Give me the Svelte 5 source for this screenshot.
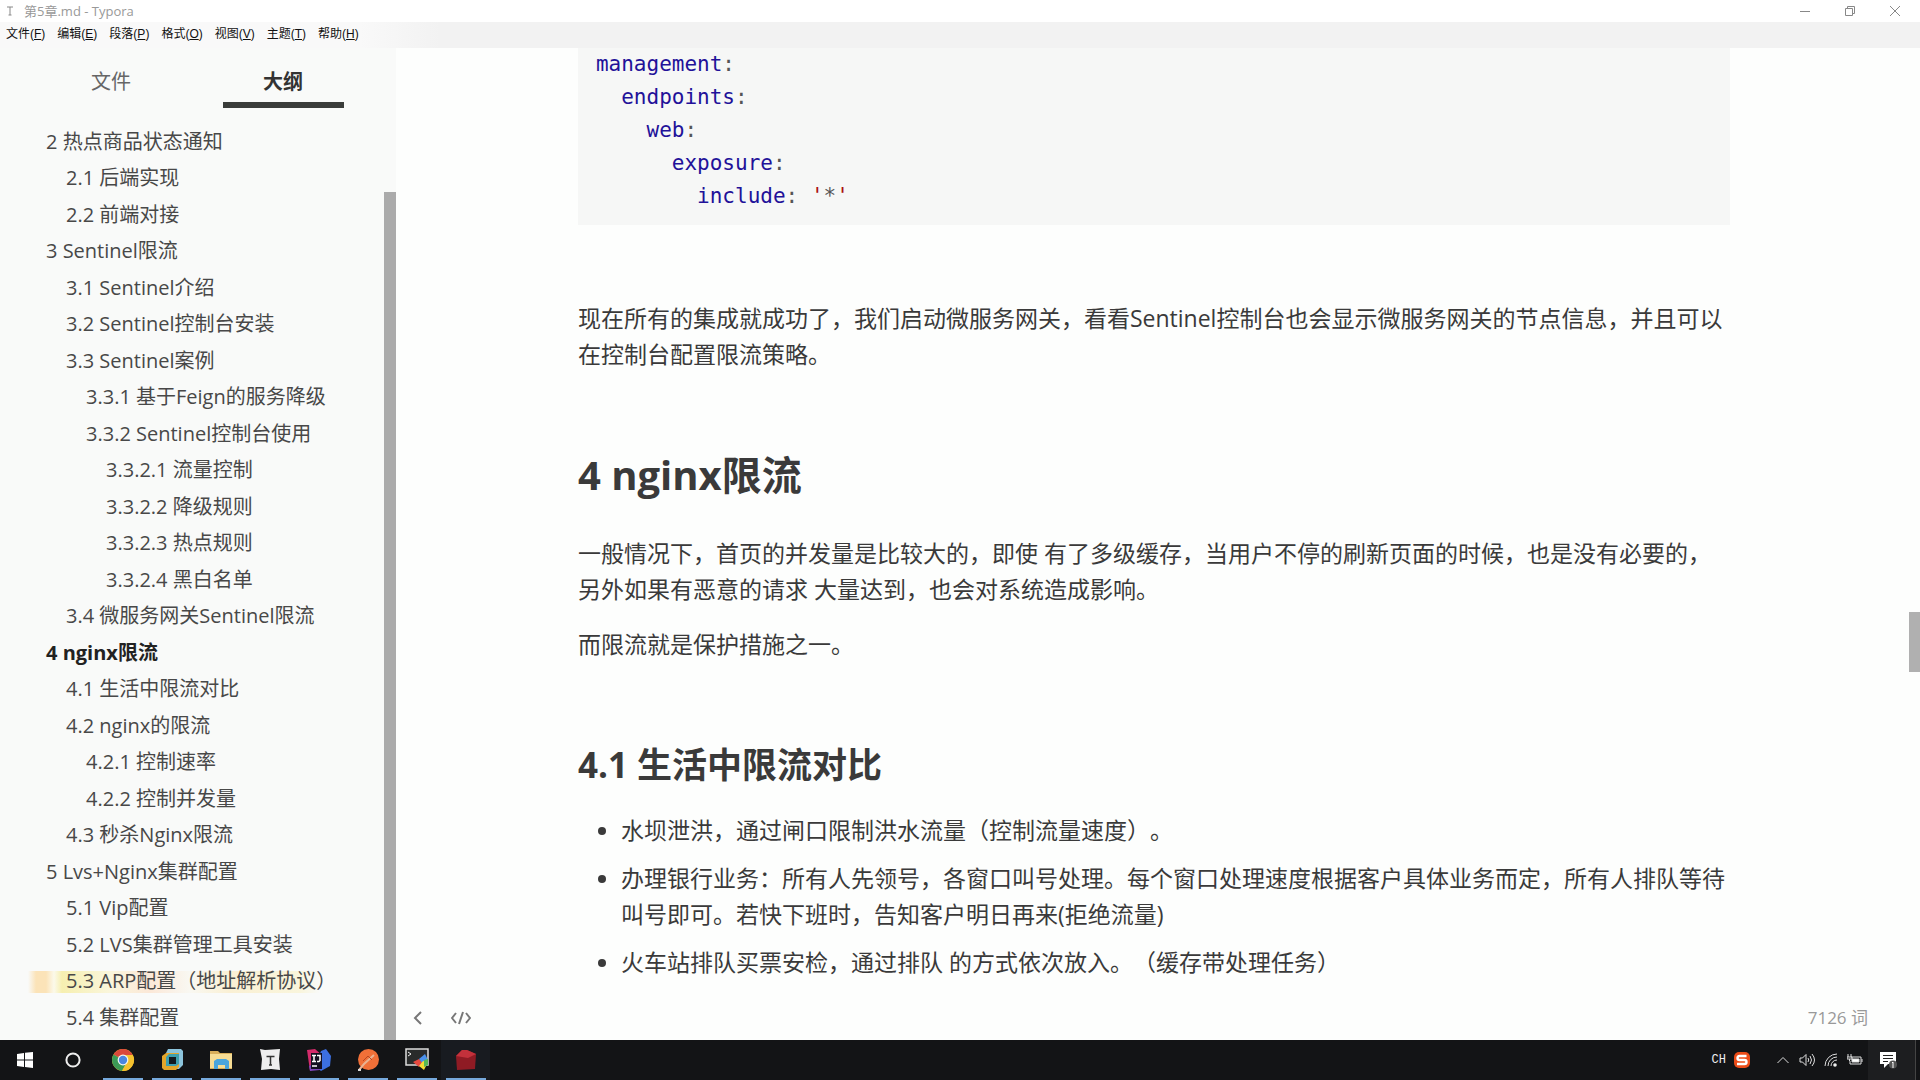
<script lang="ts">
	type OutlineItem = { level: number; text: string; active?: boolean; marked?: boolean };

	const menus = [
		['文件', 'F'],
		['编辑', 'E'],
		['段落', 'P'],
		['格式', 'O'],
		['视图', 'V'],
		['主题', 'T'],
		['帮助', 'H']
	];

	const outline: OutlineItem[] = [
		{ level: 1, text: '2 热点商品状态通知' },
		{ level: 2, text: '2.1 后端实现' },
		{ level: 2, text: '2.2 前端对接' },
		{ level: 1, text: '3 Sentinel限流' },
		{ level: 2, text: '3.1 Sentinel介绍' },
		{ level: 2, text: '3.2 Sentinel控制台安装' },
		{ level: 2, text: '3.3 Sentinel案例' },
		{ level: 3, text: '3.3.1 基于Feign的服务降级' },
		{ level: 3, text: '3.3.2 Sentinel控制台使用' },
		{ level: 4, text: '3.3.2.1 流量控制' },
		{ level: 4, text: '3.3.2.2 降级规则' },
		{ level: 4, text: '3.3.2.3 热点规则' },
		{ level: 4, text: '3.3.2.4 黑白名单' },
		{ level: 2, text: '3.4 微服务网关Sentinel限流' },
		{ level: 1, text: '4 nginx限流', active: true },
		{ level: 2, text: '4.1 生活中限流对比' },
		{ level: 2, text: '4.2 nginx的限流' },
		{ level: 3, text: '4.2.1 控制速率' },
		{ level: 3, text: '4.2.2 控制并发量' },
		{ level: 2, text: '4.3 秒杀Nginx限流' },
		{ level: 1, text: '5 Lvs+Nginx集群配置' },
		{ level: 2, text: '5.1 Vip配置' },
		{ level: 2, text: '5.2 LVS集群管理工具安装' },
		{ level: 2, text: '5.3 ARP配置（地址解析协议）', marked: true },
		{ level: 2, text: '5.4 集群配置' }
	];

	const yaml = ['management', 'endpoints', 'web', 'exposure'];
</script>

<div class="screen">
	<header class="titlebar">
		<svg class="doc-icon" viewBox="0 0 12 12"><path d="M3 2h6M6 2v8M4.500 10h3" /></svg>
		<span class="title">第5章.md - Typora</span>
		<div class="window-buttons">
			<button aria-label="最小化"><svg viewBox="0 0 12 12"><path d="M1 6.500h10" /></svg></button>
			<button aria-label="还原"><svg viewBox="0 0 12 12"><path d="M1.500 3.500h7v7h-7zM3.500 3.500v-2h7v7h-2" /></svg></button>
			<button aria-label="关闭"><svg viewBox="0 0 12 12"><path d="M1 1l10 10M11 1L1 11" /></svg></button>
		</div>
	</header>

	<nav class="menubar">
		{#each menus as [label, key]}
			<button>{label}(<u>{key}</u>)</button>
		{/each}
	</nav>

	<div class="workspace">
		<aside class="sidebar">
			<div class="tabs">
				<button>文件</button>
				<button class="active">大纲</button>
			</div>
			<ul class="outline">
				{#each outline as item}
					<li class="level-{item.level}" class:active={item.active} class:marked={item.marked}>
						<a href="#outline">{item.text}</a>
					</li>
				{/each}
			</ul>
			<div class="sidebar-thumb"></div>
		</aside>

		<main class="editor">
			<article class="write">
				<pre>{#each yaml as key, i}{'  '.repeat(i)}<b>{key}</b>:{'\n'}{/each}{'  '.repeat(4)}<b>include</b>: <i>'</i>*<i>'</i></pre>
				<p>现在所有的集成就成功了，我们启动微服务网关，看看Sentinel控制台也会显示微服务网关的节点信息，并且可以在控制台配置限流策略。</p>
				<h2>4 nginx限流</h2>
				<p>一般情况下，首页的并发量是比较大的，即使 有了多级缓存，当用户不停的刷新页面的时候，也是没有必要的，另外如果有恶意的请求 大量达到，也会对系统造成影响。</p>
				<p>而限流就是保护措施之一。</p>
				<h3>4.1 生活中限流对比</h3>
				<ul>
					<li>水坝泄洪，通过闸口限制洪水流量（控制流量速度）。</li>
					<li>办理银行业务：所有人先领号，各窗口叫号处理。每个窗口处理速度根据客户具体业务而定，所有人排队等待叫号即可。若快下班时，告知客户明日再来(拒绝流量)</li>
					<li>火车站排队买票安检，通过排队 的方式依次放入。（缓存带处理任务）</li>
				</ul>
			</article>
			<footer class="statusbar">
				<button aria-label="隐藏侧边栏"><svg viewBox="0 0 20 20"><path d="M13 4l-6 6 6 6" /></svg></button>
				<button aria-label="源代码模式"><svg viewBox="0 0 20 20"><path d="M5 5l-4 5 4 5M15 5l4 5-4 5M12 4L8 16" /></svg></button>
				<span class="word-count">7126 词</span>
			</footer>
			<div class="editor-thumb"></div>
		</main>
	</div>

	<div class="taskbar">
		<button class="app" aria-label="开始">
			<svg viewBox="0 0 24 24"><path fill="#fff" d="M4 6l7-1v6.500H4zM12 4.800L20 4v7.500h-8zM4 12.500h7V19l-7-1zM12 12.500h8V20l-8-.900z" /></svg>
		</button>
		<button class="app" aria-label="Cortana">
			<svg viewBox="0 0 24 24"><circle cx="11" cy="12" r="6.600" fill="none" stroke="#eee" stroke-width="2" /></svg>
		</button>
		<button class="app running" aria-label="Chrome">
			<svg viewBox="0 0 24 24">
				<circle cx="12" cy="12" r="11" fill="#f5c12e" />
				<path fill="#d9483b" d="M12 12L2.500 6.500a11 11 0 0 1 19 0z" />
				<path fill="#3c9a56" d="M2.500 6.500a11 11 0 0 0 8.500 16.450L16 14l-4-2z" />
				<path fill="#f5c12e" d="M12 7h9.800a11 11 0 0 1-10.800 15.950L16 14z" />
				<circle cx="12" cy="12" r="5.400" fill="#f4f6f4" /><circle cx="12" cy="12" r="4.200" fill="#4b86e0" />
			</svg>
		</button>
		<button class="app running" aria-label="VMware">
			<svg viewBox="0 0 24 24">
				<path fill="#8cc4dc" d="M8 1h13l2 2v14l-4 4H6V5z" />
				<path fill="#e4a62a" d="M2 8l4-3h13v14l-3 3H4l-2-2z" />
				<path fill="#3fa0ae" d="M6 9l3-3h10v10l-3 2H6z" /><path fill="#111a20" d="M9 9h7v7H9z" />
			</svg>
		</button>
		<button class="app running" aria-label="文件资源管理器">
			<svg viewBox="0 0 24 24">
				<path fill="#d8ae5a" d="M1 3h8l2 2h12v16H1z" /><path fill="#f6dc94" d="M1 6h22v14H1z" />
				<path fill="#4aa5dc" d="M5 21v-8l3-2h9l3 2v8h-4v-4H9v4z" />
			</svg>
		</button>
		<button class="app running" aria-label="Typora">
			<svg viewBox="0 0 24 24">
				<path fill="#eee" d="M2 1l5 1 15-1-1 10 1 11-9-1-10 1 1-11z" /><path fill="none" stroke="#333" stroke-width="1.500" d="M8.500 8.500h8M12.500 8v9M11 17h3" />
			</svg>
		</button>
		<button class="app running" aria-label="IntelliJ IDEA">
			<svg viewBox="0 0 24 24">
				<path fill="#d42b6b" d="M0 2l8-1 8 7-4 11-9 4z" /><path fill="#3c6fe0" d="M14 3l5-2 5 7-1 10-9 5-6-5z" /><path fill="#7d46b8" d="M2 18l7-4 6 4-2 4-10 1z" />
				<path fill="#141022" d="M4 5h11v16H4z" /><path fill="none" stroke="#fff" stroke-width="1.500" d="M5 7.500h4M7 7.500v6M5 13.500h4M10 7.500h3v5l-1 1h-2M5 18h5" />
			</svg>
		</button>
		<button class="app running" aria-label="Postman">
			<svg viewBox="0 0 24 24">
				<circle cx="12.500" cy="11.500" r="10.500" fill="#f07038" /><path fill="none" stroke="#e9b393" stroke-width="2" d="M18 7L8 16l-5 6" /><path fill="none" stroke="#b94721" d="M7 13l5-5 4 4" /><path fill="none" stroke="#ddd" stroke-width="2" d="M2 22h3" />
			</svg>
		</button>
		<button class="app running" aria-label="终端">
			<svg viewBox="0 0 24 24">
				<path fill="#292b2b" stroke="#ddd" stroke-width="1.500" d="M1 1h22v16H1z" /><path fill="none" stroke="#eee" d="M3 4l3 2-3 2" />
				<path fill="#e64a40" d="M8 14l6-3 4 4-4 4z" /><path fill="#4a91ed" d="M14 11l6-5 3 6-5 4z" /><path fill="#f4dc35" d="M14 18l4-5 5 1-4 8z" /><path fill="#57b857" d="M19 12l4-1v6l-4 2z" />
			</svg>
		</button>
		<button class="app running current" aria-label="录屏">
			<svg viewBox="0 0 24 24"><path fill="#8f1b24" d="M2 8l6-6h5l9 4-1 15-18 1z" /><path fill="#c3313b" d="M2 8l6-6h5l9 4-8 4z" /></svg>
		</button>

		<div class="tray">
			<span class="ime">CH</span>
			<svg class="sogou" viewBox="0 0 16 16"><rect width="16" height="16" rx="5" fill="#eb4c18" /><path fill="none" stroke="#fff" stroke-width="2.400" d="M12.500 4H5.500Q3.500 4 3.500 6t2 2h5q2 0 2 2t-2 2H3" /></svg>
			<svg class="chevron" viewBox="0 0 16 16"><path d="M2.500 11L8 5.500l5.500 5.500" /></svg>
			<svg viewBox="0 0 16 16"><path d="M1 6h2.500L7 2.500v11L3.500 10H1zM9 6q1.500 2 0 4M11 4q3 4 0 8M13 2q5 6 0 12" /></svg>
			<svg viewBox="0 0 16 16"><path d="M2 14A12 12 0 0 1 14 2M5 14A9 9 0 0 1 14 5M8 14A6 6 0 0 1 14 8" /><circle cx="12" cy="13" r="1.800" fill="#eee" stroke="none" /></svg>
			<svg viewBox="0 0 16 16"><path d="M4 5h10v7H3V9M15 7v3M1 2v3M4 2v3M0 5h5v2H0zM2.500 7v2" /><path d="M5 7h7v3H5z" fill="#fff" /></svg>
			<button class="notices" aria-label="通知">
				<svg viewBox="0 0 18 20"><path fill="#fff" stroke="none" d="M1 2h16v12H9l-4 4v-4H1z" /><path stroke="#222" d="M4 5.500h10M4 8.500h10M4 11.500h5" /><circle cx="14" cy="14.500" r="4" fill="#555" stroke="none" /><path stroke="#fff" d="M13 13l1-1v6" /></svg>
			</button>
		</div>
	</div>
</div>

<style>
	:global(body) {
		margin: 0;
	}
	.screen {
		height: 100vh;
		display: flex;
		flex-direction: column;
		overflow: hidden;
		background: #fdfefd;
		color: #3a3a3a;
		font-family: 'Open Sans', 'Noto Sans CJK SC', sans-serif;
		text-spacing-trim: space-all;
	}
	button {
		padding: 0;
		border: 0;
		background: none;
		color: inherit;
		font: inherit;
	}
	svg {
		display: block;
	}
	.titlebar {
		flex: 0 0 22px;
		display: flex;
		align-items: center;
		padding-left: 4px;
		background: #fff;
		color: #999;
		font: 13px/20px 'Open Sans', 'Noto Sans CJK SC', sans-serif;
	}
	.doc-icon {
		width: 12px;
		height: 12px;
		margin-right: 8px;
		fill: none;
		stroke: #888;
	}
	.window-buttons {
		display: flex;
		margin-left: auto;
		padding-right: 3px;
	}
	.window-buttons button {
		width: 45px;
		display: grid;
		place-items: center;
	}
	.window-buttons svg {
		width: 12px;
		height: 12px;
		fill: none;
		stroke: #888;
	}
	.menubar {
		flex: 0 0 24px;
		display: flex;
		align-items: center;
		gap: 12px;
		padding: 0 0 2px 6px;
		background: linear-gradient(90deg, #f9f9f9 360px, #f2f2f2 440px);
		color: #111;
		font: 12px/20px 'Liberation Sans', 'Noto Sans CJK SC', sans-serif;
	}
	.workspace {
		flex: 1;
		min-height: 0;
		display: flex;
	}
	.sidebar {
		position: relative;
		flex: 0 0 396px;
		display: flex;
		flex-direction: column;
		background: #f9faf9;
	}
	.tabs {
		display: grid;
		grid-template-columns: 1fr 1fr;
		padding: 0 27px 0 25px;
		font-size: 20px;
		line-height: 28px;
		color: #666;
	}
	.tabs button {
		justify-self: center;
		width: 121px;
		padding: 20px 0 6px;
		border-bottom: 6px solid transparent;
	}
	.tabs .active {
		border-color: #3a3c3a;
		color: #333;
		font-weight: 700;
	}
	.outline {
		flex: 1;
		display: flex;
		flex-direction: column;
		margin: 0;
		padding: 16px 12px 4px 0;
		list-style: none;
		font-size: 20px;
		line-height: 36px;
	}
	.outline li {
		flex: 1;
		white-space: nowrap;
	}
	.outline a {
		color: #484848;
		text-decoration: none;
	}
	.level-1 {
		padding-left: 46px;
	}
	.level-2 {
		padding-left: 66px;
	}
	.level-3 {
		padding-left: 86px;
	}
	.level-4 {
		padding-left: 106px;
	}
	.outline .active a {
		color: #222;
		font-weight: 700;
	}
	.outline .marked {
		background: linear-gradient(90deg, transparent 28px, #fbe3b8 36px 46px, #fbf9ea 54px, #f6efb0 62px, #faf6dc 110px, #fbe8d8 150px, #f9f8f2 190px, #faf0d4 230px, #f9f5dc 300px, transparent 320px) 0 8px / 100% 22px no-repeat;
	}
	.sidebar-thumb {
		position: absolute;
		top: 144px;
		right: 0;
		bottom: 0;
		width: 12px;
		background: #ababab;
	}
	.editor {
		position: relative;
		flex: 1;
		min-width: 0;
		display: flex;
		flex-direction: column;
		padding-right: 8px;
	}
	.write {
		flex: 1;
		min-height: 0;
		width: 76%;
		max-width: 1155px;
		margin: 0 auto;
		overflow: hidden;
		font-size: 23px;
		line-height: 36px;
	}
	pre {
		margin: 0 0 75px;
		padding: 0 18px 12px;
		background: #f6f7f6;
		color: #555;
		font: 21px/33px 'DejaVu Sans Mono', monospace;
	}
	pre b {
		color: #219;
		font-weight: 400;
	}
	pre i {
		color: #a11;
		font-style: normal;
	}
	p {
		margin: 0 0 19px;
	}
	h2 {
		margin: 79px 0 36px;
		font-size: 40px;
		line-height: 48px;
	}
	h3 {
		margin: 81px 0 25px;
		font-size: 35px;
		line-height: 44px;
	}
	.write ul {
		margin: 0;
		padding-left: 43px;
	}
	.write li {
		margin-bottom: 12px;
	}
	.statusbar {
		flex: 0 0 40px;
		display: flex;
		align-items: center;
		gap: 23px;
		padding: 0 44px 2px 12px;
		color: #999;
		font-size: 17px;
		line-height: 24px;
	}
	.statusbar svg {
		width: 20px;
		height: 20px;
		fill: none;
		stroke: #777;
		stroke-width: 2;
	}
	.word-count {
		margin-left: auto;
	}
	.editor-thumb {
		position: absolute;
		top: 564px;
		right: 0;
		width: 11px;
		height: 60px;
		background: #b0b0b0;
	}
	.taskbar {
		flex: 0 0 40px;
		display: flex;
		background: #131416;
	}
	.app {
		position: relative;
		width: 49px;
		display: grid;
		place-items: center;
	}
	.app svg {
		width: 24px;
		height: 24px;
	}
	.running::after {
		content: '';
		position: absolute;
		left: 5px;
		right: 4px;
		bottom: 0;
		height: 2px;
		background: #76a9dc;
	}
	.current {
		background: #181b20;
	}
	.tray {
		display: flex;
		align-items: center;
		gap: 8px;
		margin-left: auto;
		color: #eee;
	}
	.tray svg {
		width: 16px;
		height: 16px;
		fill: none;
		stroke: #ddd;
	}
	.ime {
		font: 12px/16px 'Liberation Mono', monospace;
	}
	.tray .sogou {
		margin-right: 17px;
		stroke: none;
	}
	.notices {
		width: 48px;
		height: 40px;
		margin: 0 4px 0 -3px;
		padding-right: 8px;
		display: grid;
		place-items: center;
		border-right: 1px solid #444;
		background: #1d1e20;
	}
	.tray .notices svg {
		width: 18px;
		height: 20px;
	}
</style>
